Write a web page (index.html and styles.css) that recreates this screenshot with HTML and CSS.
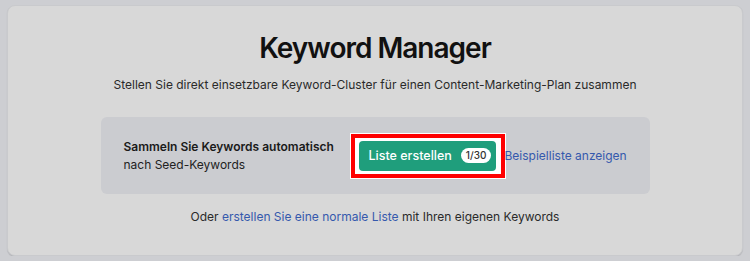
FILE: index.html
```html
<!DOCTYPE html>
<html>

<head lang="de">
    <meta charset="UTF-8">
    <title>Keyword Manager</title>
    <link rel="stylesheet" href="styles.css">
</head>

<body>
    <div class="km-card">
        <h1 class="km-title">Keyword Manager</h1>
        <p class="km-subtitle">Stellen Sie direkt einsetzbare Keyword-Cluster für einen Content-Marketing-Plan zusammen</p>

        <div class="km-auto">
            <div class="km-auto-text">
                <strong>Sammeln Sie Keywords automatisch</strong>
                <span>nach Seed-Keywords</span>
            </div>
            <div class="km-highlight">
                <a href="javascript:;" class="km-button">Liste erstellen <span class="km-badge">1/30</span></a>
            </div>
            <a href="javascript:;" class="km-link">Beispielliste anzeigen</a>
        </div>

        <p class="km-footer">Oder <a href="javascript:;" class="km-link">erstellen Sie eine normale Liste</a> mit Ihren eigenen Keywords</p>
    </div>
</body>

</html>
```

FILE: styles.css
```css
* {
    padding: 0px;
    margin: 0px;
    box-sizing: border-box;
}

body {
    background: #cdced2;
    font-family: Inter, "Noto Sans", sans-serif;
    color: #222222;
}

a {
    text-decoration: none;
}

/* 外层卡片 */
.km-card {
    margin: 5px 7px 0px 7px;
    height: 251px;
    background: #d8d8d8;
    border: 1px solid #c9cacd;
    border-radius: 8px;
    box-shadow: 0 1px 1px rgba(0, 0, 0, .12);
    padding-top: 24px;
    display: flex;
    flex-direction: column;
    align-items: center;
    white-space: nowrap;
}

.km-title {
    font-size: 28px;
    line-height: 36px;
    font-weight: 600;
    color: #111111;
    letter-spacing: -1px;
}

.km-subtitle {
    margin-top: 10px;
    font-size: 12px;
    line-height: 18px;
    color: #2a2a2a;
}

/* 自动收集区域 */
.km-auto {
    margin-top: 23px;
    width: 549px;
    height: 77px;
    background: #cbccd0;
    border-radius: 6px;
    padding: 0px 20px 0px 23px;
    display: flex;
    align-items: center;
}

.km-auto-text {
    display: flex;
    flex-direction: column;
    font-size: 12px;
    line-height: 18px;
    width: 227px;
    flex-shrink: 0;
}

.km-auto-text strong {
    font-weight: 600;
    color: #1a1a1a;
}

.km-highlight {
    border: 4px solid #ff0000;
    box-shadow: 0 0 0 1px #ffffff;
    background: #ffffff;
    padding: 3px 5px 3px 4px;
    flex-shrink: 0;
}

.km-button {
    display: flex;
    align-items: center;
    gap: 9px;
    height: 30px;
    width: 137px;
    padding: 0px 4px 0px 10px;
    background: #1f9e7c;
    border-radius: 4px;
    color: #ffffff;
    font-size: 12.5px;
    font-weight: 500;
}

.km-badge {
    background: #ffffff;
    color: #333333;
    font-size: 10px;
    line-height: 15px;
    padding: 0px 5px;
    border-radius: 8px;
}

.km-link {
    color: #3559ad;
    font-size: 12px;
}

.km-footer {
    margin-top: 14px;
    font-size: 12px;
    line-height: 18px;
    color: #2a2a2a;
}
```
